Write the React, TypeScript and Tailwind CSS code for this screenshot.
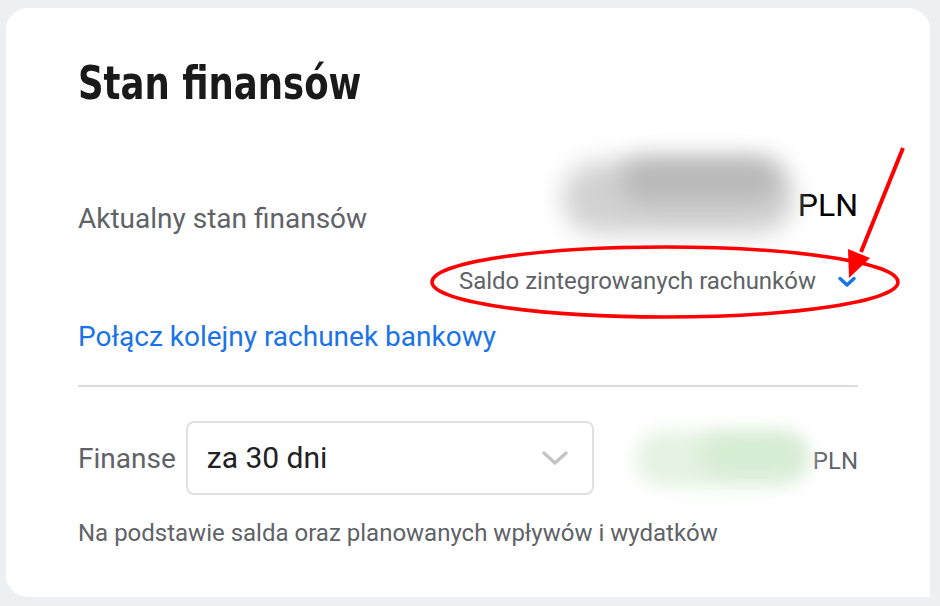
import React from "react";

export default function App() {
  return (
    <div className="w-[940px] h-[606px] bg-[#edf0f3] pt-[8px] pl-[6px] overflow-hidden" style={{ fontFamily: "Roboto, 'Liberation Sans', sans-serif" }}>
      <div className="relative w-[924px] h-[589px] bg-white rounded-tl-[22px] rounded-tr-[22px] rounded-bl-[22px] pl-[72px] pr-[72px] pt-[47px]">
        <h1 className="text-[47px] leading-[56px] font-bold text-[#1a1a1a] origin-left scale-x-[0.84] whitespace-nowrap" style={{ fontFamily: "'DejaVu Sans Condensed', 'Open Sans', sans-serif" }}>
          Stan finansów
        </h1>

        <div className="mt-[39px] flex items-start justify-between h-[90px]">
          <span className="mt-[52px] text-[28px] leading-[33px] text-[#5f6368]">Aktualny stan finansów</span>
          <div className="flex items-start">
            <div className="relative w-[238px] h-[90px]">
              <div className="absolute left-[2px] top-[12px] w-[232px] h-[72px] rounded-full bg-[#d2d2d2] blur-[12px]" />
              <div className="absolute left-[60px] top-[8px] w-[160px] h-[44px] rounded-full bg-[#b8b8b8] blur-[12px]" />
            </div>
            <span className="mt-[36px] text-[32px] leading-[38px] text-black">PLN</span>
          </div>
        </div>

        <div className="mt-[27px] flex justify-end items-center h-[28px] pr-[1px]">
          <span className="text-[24px] leading-[28px] text-[#5f6368]">Saldo zintegrowanych rachunków</span>
          <svg className="ml-[21px] mt-[1px]" width="20" height="14" viewBox="0 0 20 14">
            <path d="M3 3.5 L10 10 L17 3.5" fill="none" stroke="#1a73e8" strokeWidth="3.5" strokeLinecap="round" strokeLinejoin="round" />
          </svg>
        </div>

        <div className="mt-[25px] text-[28px] text-[#1a73e8] leading-[33px]">Połącz kolejny rachunek bankowy</div>

        <div className="mt-[32px] h-[2px] bg-[#dadce0]" />

        <div className="mt-[34px] flex items-center">
          <span className="text-[28px] leading-[33px] text-[#5f6368]">Finanse</span>
          <div className="ml-[10px] w-[408px] h-[74px] border-2 border-[#dfe1e5] rounded-[8px] flex items-center justify-between pl-[19px] pr-[23px]">
            <span className="text-[30px] leading-[36px] text-[#202124]">za 30 dni</span>
            <svg width="28" height="18" viewBox="0 0 28 18">
              <path d="M3 4 L14 14 L25 4" fill="none" stroke="#c4c4c4" strokeWidth="3.5" strokeLinecap="round" strokeLinejoin="round" />
            </svg>
          </div>
          <div className="flex-1 flex items-center justify-end">
            <div className="relative w-[182px] h-[70px]">
              <div className="absolute left-[4px] top-[8px] w-[174px] h-[56px] rounded-full bg-[#e5f3e3] blur-[9px]" />
              <div className="absolute left-[70px] top-[12px] w-[104px] h-[40px] rounded-full bg-[#d6ecd3] blur-[9px]" />
            </div>
            <span className="mt-[6px] text-[24px] leading-[28px] text-[#5f6368]">PLN</span>
          </div>
        </div>

        <div className="mt-[24px] text-[24px] leading-[28px] text-[#5f6368]">Na podstawie salda oraz planowanych wpływów i wydatków</div>

        <svg className="absolute left-0 top-0 pointer-events-none" width="924" height="589" viewBox="6 8 924 589">
          <ellipse cx="665" cy="282" rx="233" ry="35" fill="none" stroke="#ff0000" strokeWidth="3.5" />
          <line x1="903" y1="148" x2="861" y2="252" stroke="#ff0000" strokeWidth="4" />
          <polygon points="849,278 848,249 870,258" fill="#ff0000" />
        </svg>
      </div>
    </div>
  );
}
